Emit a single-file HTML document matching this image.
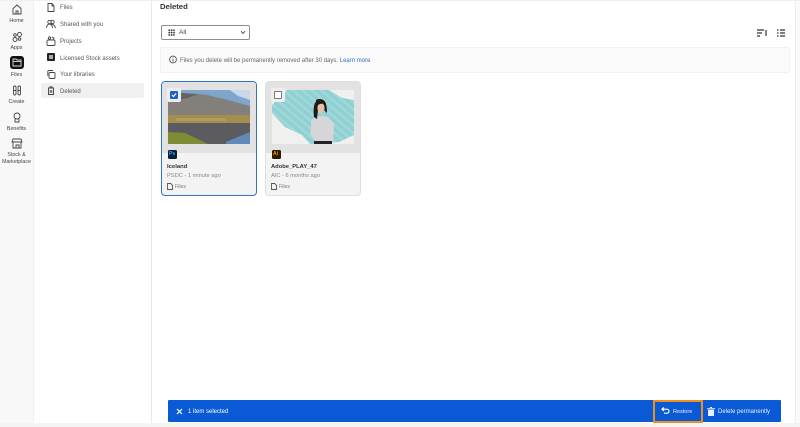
<!DOCTYPE html>
<html><head><meta charset="utf-8"><style>
html,body{margin:0;padding:0;width:800px;height:427px;overflow:hidden;background:#fff;font-family:"Liberation Sans",sans-serif;color:#444}
body{filter:blur(.3px)}
div,span,svg{position:absolute}
.t{white-space:nowrap}
.rl{font-size:5.300px;color:#444;text-align:center;width:33px;left:0;line-height:7px}
.nl{font-size:6px;color:#555;left:60px;white-space:nowrap;line-height:9px}
svg{fill:none;stroke:#444;stroke-width:.9}
</style></head><body>
<div style="left:0;top:0;width:33px;height:427px;background:#f8f8f8"></div>
<div style="left:33px;top:0;width:1px;height:427px;background:#f0f0f0"></div>
<div style="left:151px;top:0;width:1px;height:427px;background:#e8e8e8"></div>
<div style="left:795px;top:0;width:5px;height:427px;background:#fafafa;border-left:1px solid #eee;box-sizing:border-box"></div>
<div style="left:0;top:0;width:800px;height:1px;background:#efefef"></div>
<div style="left:0;top:423px;width:800px;height:4px;background:#f4f4f4"></div>

<!-- rail -->
<svg style="left:12px;top:4px" width="10" height="11" viewBox="0 0 10 11"><path d="M1 4.500 5 1l4 3.500V10H1z"/><path d="M4 10V7h2v3"/></svg>
<div class="rl" style="top:18px">Home</div>
<svg style="left:11px;top:31px" width="12" height="12" viewBox="0 0 12 12"><circle cx="4" cy="8.500" r="2"/><circle cx="8.500" cy="3.500" r="2"/><circle cx="8.500" cy="8" r="1.300"/><circle cx="4" cy="4" r="1.300"/></svg>
<div class="rl" style="top:45px">Apps</div>
<div style="left:10px;top:56px;width:14px;height:13px;background:#111;border-radius:3px"></div>
<svg style="left:12px;top:58px;stroke:#ddd" width="10" height="9" viewBox="0 0 10 9"><path d="M1 1h3l1 1h4v6H1z"/><path d="M1 3.500h8"/></svg>
<div class="rl" style="top:72px">Files</div>
<svg style="left:13px;top:85px" width="8" height="11" viewBox="0 0 8 11"><rect x=".5" y="1" width="2.500" height="9" rx="1.200"/><rect x="5" y="1" width="2.500" height="9" rx="1.200"/><path d="M.5 5.500H3M5 5.500h2.500"/></svg>
<div class="rl" style="top:99px">Create</div>
<svg style="left:13px;top:112px" width="8" height="11" viewBox="0 0 8 11"><circle cx="4" cy="4" r="3"/><path d="M2 7v3h4V7"/></svg>
<div class="rl" style="top:126px">Benefits</div>
<svg style="left:11px;top:138px" width="12" height="11" viewBox="0 0 12 11"><path d="M2 1h8l1 3H1zM2 4v6h8V4M5 10V7h3v3"/></svg>
<div class="rl" style="top:152px;line-height:7px">Stock &amp;<br>Marketplace</div>

<!-- nav -->
<div style="left:41px;top:83px;width:103px;height:15px;background:#f0f0f0;border-radius:2px"></div>
<svg style="left:47px;top:3px" width="8" height="9" viewBox="0 0 8 9"><path d="M1 .5h4L7 3v5.500H1z"/><path d="M5 .5V3h2"/></svg>
<div class="nl" style="top:4px">Files</div>
<svg style="left:46px;top:19px" width="10" height="10" viewBox="0 0 10 10"><circle cx="3.500" cy="3" r="1.700"/><circle cx="6.500" cy="3" r="1.700"/><path d="M.5 9c0-3 2-4 3-4s3 1 3 4M5 5c1.500 0 4 1 4.500 4"/></svg>
<div class="nl" style="top:21px">Shared with you</div>
<svg style="left:46px;top:36px" width="10" height="10" viewBox="0 0 10 10"><rect x="1" y="4" width="8" height="5.500" rx="1"/><circle cx="3.500" cy="2" r="1.200"/><path d="M6 1l2 1-1 1.500"/></svg>
<div class="nl" style="top:38px">Projects</div>
<div style="left:47px;top:53px;width:8px;height:8px;background:#222;border-radius:1px"></div>
<div style="left:49px;top:55px;width:4px;height:4px;background:#aaa"></div>
<div class="nl" style="top:55px">Licensed Stock assets</div>
<svg style="left:47px;top:70px" width="9" height="9" viewBox="0 0 9 9"><rect x="2" y="2.500" width="6" height="6" rx="1"/><path d="M.8 6V1.500a1 1 0 0 1 1-1H6"/></svg>
<div class="nl" style="top:71px">Your libraries</div>
<svg style="left:47px;top:86px" width="8" height="9" viewBox="0 0 8 9"><path d="M1 2h6M3 2V.8h2V2M1.500 2v6.500h5V2M3.200 4v3M4.800 4v3"/></svg>
<div class="nl" style="top:88px">Deleted</div>

<!-- main -->
<div class="t" style="left:160px;top:1px;font-size:7.700px;font-weight:bold;color:#333;line-height:11px">Deleted</div>
<div style="left:161px;top:25px;width:89px;height:15px;border:1px solid #8e8e8e;border-radius:2px;box-sizing:border-box;background:#fff"></div>
<div style="left:168px;top:29px;width:7px;height:7px;background-image:radial-gradient(#333 0.9px,transparent 1px);background-size:2.400px 2.400px"></div>
<div class="t" style="left:179px;top:28px;font-size:6.500px;color:#444;line-height:9px">All</div>
<svg style="left:240px;top:30px" width="6" height="5" viewBox="0 0 6 5"><path d="M1 1.200 3 3.500l2-2.300"/></svg>
<svg style="left:757px;top:29px;stroke-width:1.200;stroke:#333" width="11" height="9" viewBox="0 0 11 9"><path d="M0 1h7M0 4h5M0 7h3M9 1v6"/></svg>
<svg style="left:777px;top:29px;stroke-width:1.200;stroke:#333" width="8" height="9" viewBox="0 0 8 9"><path d="M0 1h1.500M3 1h5M0 4h1.500M3 4h5M0 7h1.500M3 7h5"/></svg>

<div style="left:160px;top:47px;width:630px;height:26px;background:#fafafa;border:1px solid #f2f2f2;border-radius:2px;box-sizing:border-box"></div>
<svg style="left:169px;top:55px;stroke:#555" width="8" height="9" viewBox="0 0 8 9"><circle cx="4" cy="4.500" r="3.400"/><path d="M4 4v2.500M4 2.500v.8"/></svg>
<div class="t" style="left:180px;top:57px;font-size:6px;color:#666;line-height:8px">Files you delete will be permanently removed after 30 days. <span style="position:static;color:#2a6fc0">Learn more</span></div>

<!-- card 1 -->
<div style="left:161px;top:81px;width:96px;height:115px;background:#f3f3f3;border:1px solid #2f76c8;border-radius:4px;box-sizing:border-box;overflow:hidden">
<div style="left:0;top:0;width:94px;height:71px;background:#e2e2e2"></div>
</div>
<svg style="left:168px;top:90px;stroke:none" width="82" height="54" viewBox="0 0 82 54" preserveAspectRatio="none">
<rect width="82" height="54" fill="#7ea6cc"/>
<path d="M62 0H82V10L70 6z" fill="#c9d8e6"/>
<path d="M0 7 13 3 37 4.500 60 10 82 16V26H0z" fill="#83807b"/>
<path d="M0 7 13 3 30 4 20 8 0 12z" fill="#66645f"/>
<rect y="25" width="82" height="9" fill="#a38e4f"/>
<rect x="8" y="28" width="50" height="3" fill="#b09a5c"/>
<rect y="33" width="82" height="21" fill="#5c5c60"/>
<path d="M58 52 82 42V54H58z" fill="#5f8ab8"/>
<path d="M0 42 17 43 40 54H0z" fill="#7f8c35"/>
</svg>
<div style="left:167px;top:88px;width:14px;height:14px;background:#eee;border-radius:2px"></div>
<div style="left:170px;top:91px;width:8px;height:8px;background:#1d62cc;border-radius:1px"></div>
<svg style="left:171px;top:92px;stroke:#fff;stroke-width:1.100" width="6" height="6" viewBox="0 0 6 6"><path d="M1 3l1.500 1.500L5 1.500"/></svg>
<div style="left:168px;top:150px;width:9px;height:9px;background:#0a1f3a;border-radius:1.500px"></div>
<div class="t" style="left:169px;top:151px;font-size:5px;font-weight:bold;color:#33a8f5;line-height:7px">Ps</div>
<div class="t" style="left:167px;top:163px;font-size:5.900px;font-weight:bold;color:#333;line-height:8px">Iceland</div>
<div class="t" style="left:167px;top:172px;font-size:5.700px;color:#888;line-height:9px">PSDC - 1 minute ago</div>
<svg style="left:167px;top:183px;stroke:#555" width="6" height="7" viewBox="0 0 6 7"><path d="M.5.500h3.200l1.800 1.800v4.200h-5z"/></svg>
<div class="t" style="left:175px;top:183px;font-size:5.200px;color:#777;line-height:8px">Files</div>

<!-- card 2 -->
<div style="left:265px;top:81px;width:96px;height:115px;background:#f3f3f3;border:1px solid #dedede;border-radius:4px;box-sizing:border-box;overflow:hidden">
<div style="left:0;top:0;width:94px;height:71px;background:#e2e2e2"></div>
</div>
<svg style="left:272px;top:90px;stroke:none" width="82" height="54" viewBox="0 0 82 54">
<defs><pattern id="st" width="6" height="6" patternUnits="userSpaceOnUse" patternTransform="rotate(-50)"><rect width="6" height="6" fill="#8fd0d2"/><rect width="2.500" height="6" fill="#a0d8d9"/></pattern></defs>
<rect width="82" height="54" fill="#f0f0ee"/>
<path d="M0 15 15 0H57L70 8 82 10V45L67 52 38 54 30 45 13 37 0 23z" fill="url(#st)"/>
<path d="M39 30 46 26 56 27 62 33 61 52H44L38 44 39 38z" fill="#d6d6d8"/>
<path d="M42 51H60V54H42z" fill="#222"/>
<path d="M42 27C41 17 42 10 48 10 54 10 55 15 55 23L52 20H46L45 29z" fill="#1f1a18"/>
<ellipse cx="49" cy="18" rx="3.600" ry="5" fill="#e8c0a8"/>
<path d="M44 10C47 8 53 9 54 14 50 13 47 14 44 16z" fill="#1f1a18"/>
</svg>
<div style="left:271px;top:88px;width:14px;height:14px;background:#eee;border-radius:2px"></div>
<div style="left:274px;top:91px;width:8px;height:8px;border:1px solid #777;border-radius:1px;box-sizing:border-box;background:#fff"></div>
<div style="left:272px;top:150px;width:9px;height:9px;background:#2e1a00;border-radius:1.500px"></div>
<div class="t" style="left:273px;top:151px;font-size:5px;font-weight:bold;color:#ff9a00;line-height:7px">Ai</div>
<div class="t" style="left:271px;top:163px;font-size:5.800px;font-weight:bold;color:#333;line-height:8px">Adobe_PLAY_47</div>
<div class="t" style="left:271px;top:172px;font-size:5.700px;color:#888;line-height:9px">AIC - 6 months ago</div>
<svg style="left:271px;top:183px;stroke:#555" width="6" height="7" viewBox="0 0 6 7"><path d="M.5.500h3.200l1.800 1.800v4.200h-5z"/></svg>
<div class="t" style="left:279px;top:183px;font-size:5.200px;color:#777;line-height:8px">Files</div>

<!-- action bar -->
<div style="left:168px;top:400px;width:613px;height:22px;background:#0a5ad6;border-radius:1px"></div>
<svg style="left:176px;top:408px;stroke:#fff;stroke-width:1.200" width="7" height="7" viewBox="0 0 7 7"><path d="M1 1l5 5M6 1 1 6"/></svg>
<div class="t" style="left:188px;top:408px;font-size:6px;color:#fff;line-height:8px">1 item selected</div>
<div style="left:653px;top:400px;width:50px;height:23px;border:2px solid #ee8f22;box-sizing:border-box"></div>
<svg style="left:661px;top:407px;stroke:#fff;stroke-width:1.200" width="9" height="7" viewBox="0 0 9 7"><path d="M3 .5 1 2.200 3 4M1 2.200h5a2 2 0 0 1 0 4H3"/></svg>
<div class="t" style="left:673px;top:408px;font-size:5.500px;color:#e8f0fc;line-height:8px">Restore</div>
<svg style="left:707px;top:407px;stroke:none;fill:#e8f0fc" width="8" height="9" viewBox="0 0 8 9"><path d="M0 1.200h8V2.200H0zM3 0h2v1H3zM1 2.800h6V9H1z"/></svg>
<div class="t" style="left:718px;top:408px;font-size:6px;color:#e8f0fc;line-height:8px">Delete permanently</div>
</body></html>
